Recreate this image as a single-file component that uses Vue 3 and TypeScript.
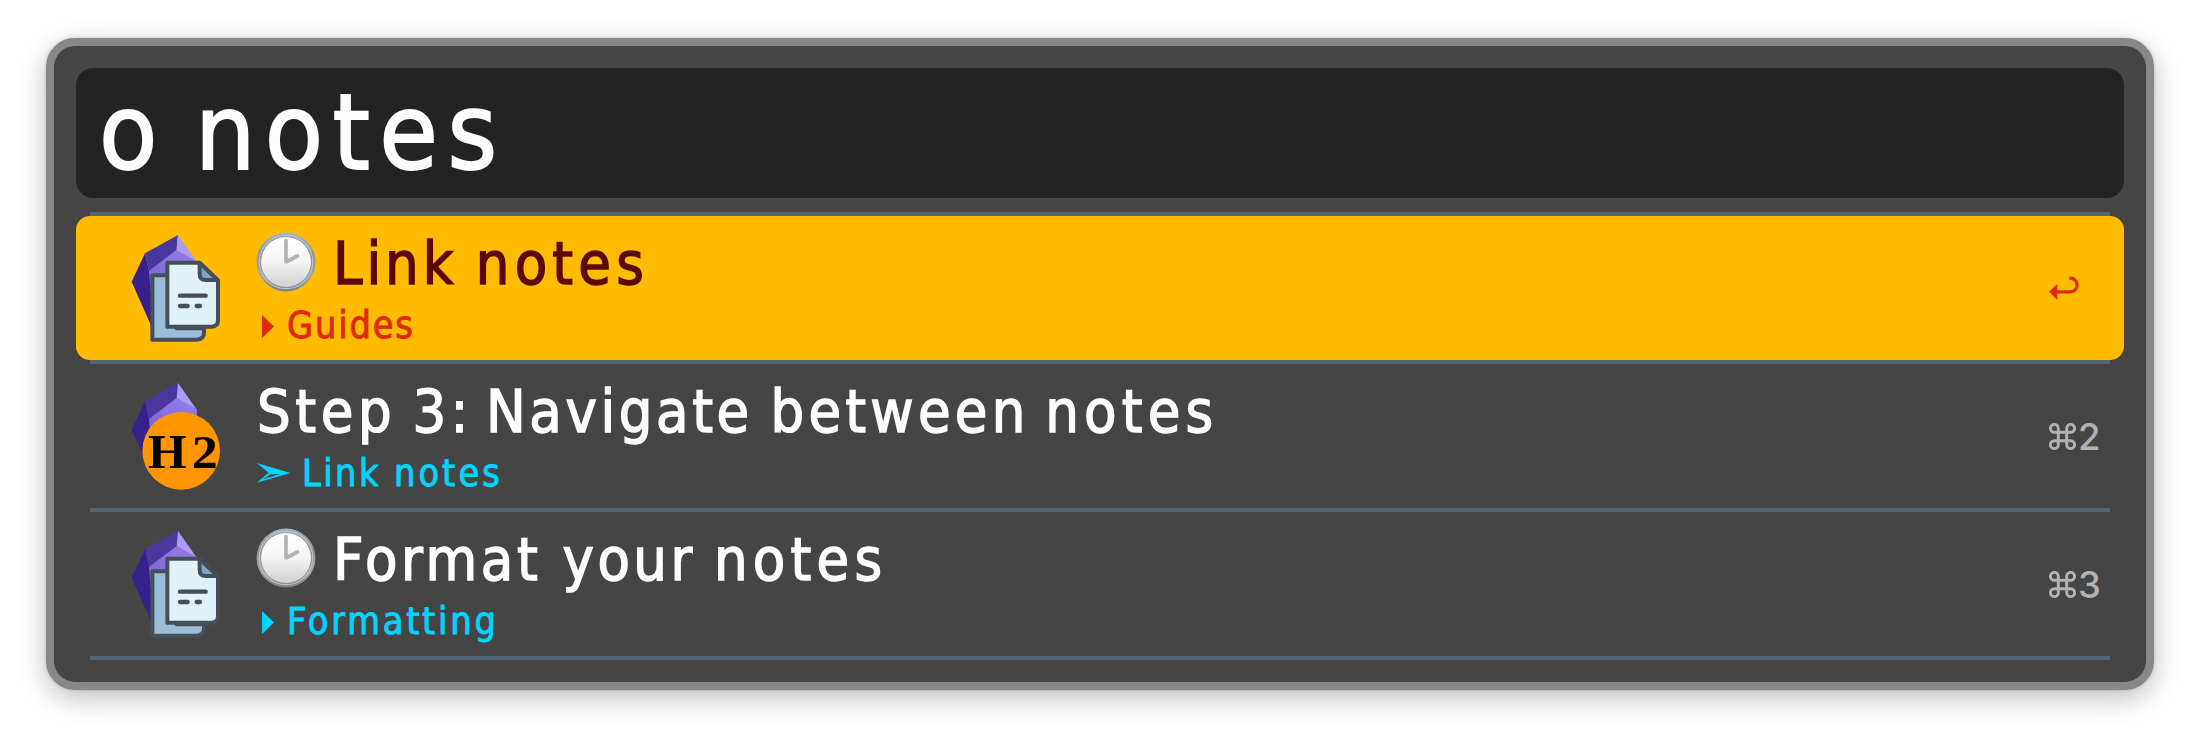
<script setup lang="ts">
interface Word {
  text: string
  width?: number
  spacing: number
}

interface Result {
  icon: 'pages' | 'heading'
  recent: boolean
  title: Word[]
  marker: 'triangle' | 'arrow'
  subtitle: Word[]
  shortcut: string
  selected: boolean
}

const query: Word[] = [
  { text: 'o ', width: 96, spacing: 0 },
  { text: 'notes', spacing: 9.4 },
]

const results: Result[] = [
  {
    icon: 'pages',
    recent: true,
    title: [
      { text: 'Link ', width: 142.8, spacing: 3.9 },
      { text: 'notes', spacing: 5.2 },
    ],
    marker: 'triangle',
    subtitle: [{ text: 'Guides', spacing: 1.9 }],
    shortcut: '',
    selected: true,
  },
  {
    icon: 'heading',
    recent: false,
    title: [
      { text: 'Step ', width: 155.5, spacing: 4.6 },
      { text: '3: ', width: 73.5, spacing: 4.3 },
      { text: 'Navigate ', width: 284.6, spacing: 3.6 },
      { text: 'between ', width: 274.6, spacing: 4.2 },
      { text: 'notes', spacing: 5.2 },
    ],
    marker: 'arrow',
    subtitle: [
      { text: 'Link ', width: 92, spacing: 2.5 },
      { text: 'notes', spacing: 3.1 },
    ],
    shortcut: '2',
    selected: false,
  },
  {
    icon: 'pages',
    recent: true,
    title: [
      { text: 'Format ', width: 229.5, spacing: 3.6 },
      { text: 'your ', width: 151.5, spacing: 3.5 },
      { text: 'notes', spacing: 5.2 },
    ],
    marker: 'triangle',
    subtitle: [{ text: 'Formatting', spacing: 2.8 }],
    shortcut: '3',
    selected: false,
  },
]

const wordStyle = (w: Word) => ({
  width: w.width ? `${w.width}px` : 'auto',
  letterSpacing: `${w.spacing}px`,
})
</script>

<template>
  <main class="stage">
    <section class="panel">
      <div class="query">
        <span v-for="(w, i) in query" :key="i" class="word" :style="wordStyle(w)">{{ w.text }}</span>
      </div>
      <div class="divider first"></div>
      <template v-for="(r, n) in results" :key="n">
        <div class="row" :class="{ selected: r.selected }">
          <svg class="icon" viewBox="60 51 276 336">
            <defs>
              <linearGradient :id="`face${n}`" x1="0" y1="1" x2="1" y2="0">
                <stop offset="0" stop-color="#7a62d0" />
                <stop offset="1" stop-color="#9580ec" />
              </linearGradient>
            </defs>
            <path d="M105 115 65 200 125 336 150 336 117 168Z" fill="#35208c" />
            <path d="M204 60 105 115 117 170 200 105Z" fill="#4c37a0" />
            <path d="M204 60 200 105 261 141Z" fill="#ad9cf6" />
            <path d="M200 105 117 168 122 230 240 230 260 158 261 139Z" :fill="`url(#face${n})`" />
            <g v-if="r.icon === 'pages'" stroke="#464f59" stroke-width="12" stroke-linejoin="round" stroke-linecap="round">
              <path d="M127 181H200V340H282V352Q282 374 260 374H127Z" fill="#9abcd9" />
              <path d="M172 143H269L324 197V316Q324 335 305 335H172Z" fill="#e0f1f8" />
              <path d="M269 144V177Q269 195 287 195H323Z" fill="#7aa5cc" />
              <path d="M210 242H287M210 273H233M260 273H270" stroke-width="13" fill="none" />
            </g>
            <g v-else>
              <circle cx="213.500" cy="263.500" r="116.500" fill="#ff9500" />
              <text x="114" y="314" class="h" textLength="116" lengthAdjust="spacingAndGlyphs">H</text>
              <text x="245" y="314" class="two" textLength="78" lengthAdjust="spacingAndGlyphs">2</text>
            </g>
          </svg>
          <div class="body">
            <div class="title">
              <svg v-if="r.recent" class="clock" viewBox="0 0 60 60">
                <defs>
                  <linearGradient :id="`rim${n}`" x1="0" y1="0" x2="0" y2="1">
                    <stop offset="0" stop-color="#a5b5c5" />
                    <stop offset=".35" stop-color="#8f9499" />
                    <stop offset=".75" stop-color="#a5a5a5" />
                    <stop offset="1" stop-color="#808080" />
                  </linearGradient>
                  <linearGradient :id="`dial${n}`" x1="0" y1="0" x2="0" y2="1">
                    <stop offset="0" stop-color="#ffffff" />
                    <stop offset=".5" stop-color="#f4f4f4" />
                    <stop offset="1" stop-color="#cfcfcf" />
                  </linearGradient>
                </defs>
                <circle cx="30" cy="30" r="29.500" :fill="`url(#rim${n})`" />
                <circle cx="30" cy="30" r="26.700" fill="none" stroke="#bcc2c7" stroke-width="1.200" />
                <circle cx="30" cy="30" r="25.400" :fill="`url(#dial${n})`" stroke="#85898d" stroke-width=".8" />
                <path d="M30 8.500V30L41.500 24" fill="none" stroke="#b4b4b4" stroke-width="3.700" stroke-linecap="round" stroke-linejoin="round" />
              </svg>
              <span v-for="(w, i) in r.title" :key="i" class="word" :style="wordStyle(w)">{{ w.text }}</span>
            </div>
            <div class="subtitle">
              <svg v-if="r.marker === 'triangle'" class="triangle" viewBox="0 0 31 51">
                <path d="M6 15 18 26.500 6 38Z" fill="currentColor" />
              </svg>
              <svg v-else class="arrow" viewBox="0 0 46 51">
                <path fill-rule="evenodd" d="M.7 15 34.300 25 .7 34.800 12.600 24.700ZM7 31.300 24.500 26 14.500 26.300Z" fill="currentColor" />
              </svg>
              <span v-for="(w, i) in r.subtitle" :key="i" class="word" :style="wordStyle(w)">{{ w.text }}</span>
            </div>
          </div>
          <div class="shortcut">
            <svg v-if="r.selected" class="return" viewBox="207 230 90 76">
              <path d="M207 277 232 254V302Z" fill="currentColor" />
              <path d="M230 277.500H271A20.500 20.500 0 0 0 271 236.500H268" fill="none" stroke="currentColor" stroke-width="9.500" />
            </svg>
            <template v-else>
              <svg class="command" viewBox="0 0 27 27">
                <path d="M9.300 9.300V5.400A3.950 3.950 0 1 0 5.400 9.300H21.600A3.950 3.950 0 1 0 17.700 5.400V21.600A3.950 3.950 0 1 0 21.600 17.700H5.400A3.950 3.950 0 1 0 9.300 21.600Z" fill="none" stroke="currentColor" stroke-width="2.900" />
              </svg>
              <span>{{ r.shortcut }}</span>
            </template>
          </div>
        </div>
        <div class="divider"></div>
      </template>
    </section>
  </main>
</template>

<style>
body {
  margin: 0;
  background: #fff;
}
</style>

<style scoped>
.stage {
  box-sizing: border-box;
  width: 2200px;
  height: 744px;
  padding: 38px 46px 54px;
  overflow: hidden;
  font-family: "DejaVu Sans", "DejaVu Sans Condensed", sans-serif;
  font-stretch: 90%;
}
.panel {
  box-sizing: border-box;
  height: 652px;
  padding: 22px;
  border: 8px solid #888;
  border-radius: 29px;
  background: #454545;
  box-shadow: 0 8px 28px rgba(0, 0, 0, 0.26), 0 0 3px rgba(0, 0, 0, 0.2);
}
.query {
  display: flex;
  box-sizing: border-box;
  height: 130px;
  padding-left: 23px;
  border-radius: 17px;
  background: #232323;
  color: #fdfdfd;
  font-family: "DejaVu Sans Condensed", "DejaVu Sans", sans-serif;
  font-size: 106px;
  line-height: 130px;
  -webkit-text-stroke: 1.8px currentColor;
}
.word {
  display: block;
  flex: none;
  white-space: pre;
}
.divider {
  height: 4px;
  margin: 0 14px;
  background: #526577;
}
.first {
  margin-top: 14px;
}
.row {
  display: flex;
  height: 144px;
  border-radius: 14px;
  color: #fdfdfd;
}
.icon {
  flex: none;
  width: 92px;
  height: 112px;
  margin: 16px 34px 0 54px;
}
.h,
.two {
  font-family: "Liberation Serif", serif;
  font-weight: bold;
  font-stretch: normal;
  font-size: 146px;
  fill: #000;
}
.two {
  font-size: 138px;
}
.body {
  flex: 1;
  padding-top: 11.6px;
  font-family: "DejaVu Sans Condensed", "DejaVu Sans", sans-serif;
}
.title {
  display: flex;
  height: 72px;
  padding-left: 1px;
  font-size: 59px;
  line-height: 72px;
  -webkit-text-stroke: 1.4px currentColor;
}
.clock {
  width: 60px;
  height: 60px;
  margin: 4.6px 17px 0 -1px;
}
.subtitle {
  display: flex;
  height: 51px;
  color: #00d4ff;
  font-size: 37.4px;
  line-height: 51px;
  -webkit-text-stroke: 0.9px currentColor;
}
.triangle {
  width: 31px;
  height: 51px;
}
.arrow {
  width: 46px;
  height: 51px;
}
.selected {
  background: #fb0;
}
.selected .title {
  color: #5a0906;
}
.selected .subtitle,
.selected .shortcut {
  color: #dd2a0b;
}
.shortcut {
  display: flex;
  align-items: center;
  flex: none;
  width: 75px;
  padding-top: 1px;
  color: #b2b2b2;
  font-family: Inter, sans-serif;
  font-size: 36.5px;
  font-stretch: normal;
  font-weight: 500;
}
.command {
  width: 27px;
  height: 27px;
  margin-right: 2px;
}
.return {
  width: 30px;
  height: 25.3px;
  margin-top: 1px;
}
</style>
